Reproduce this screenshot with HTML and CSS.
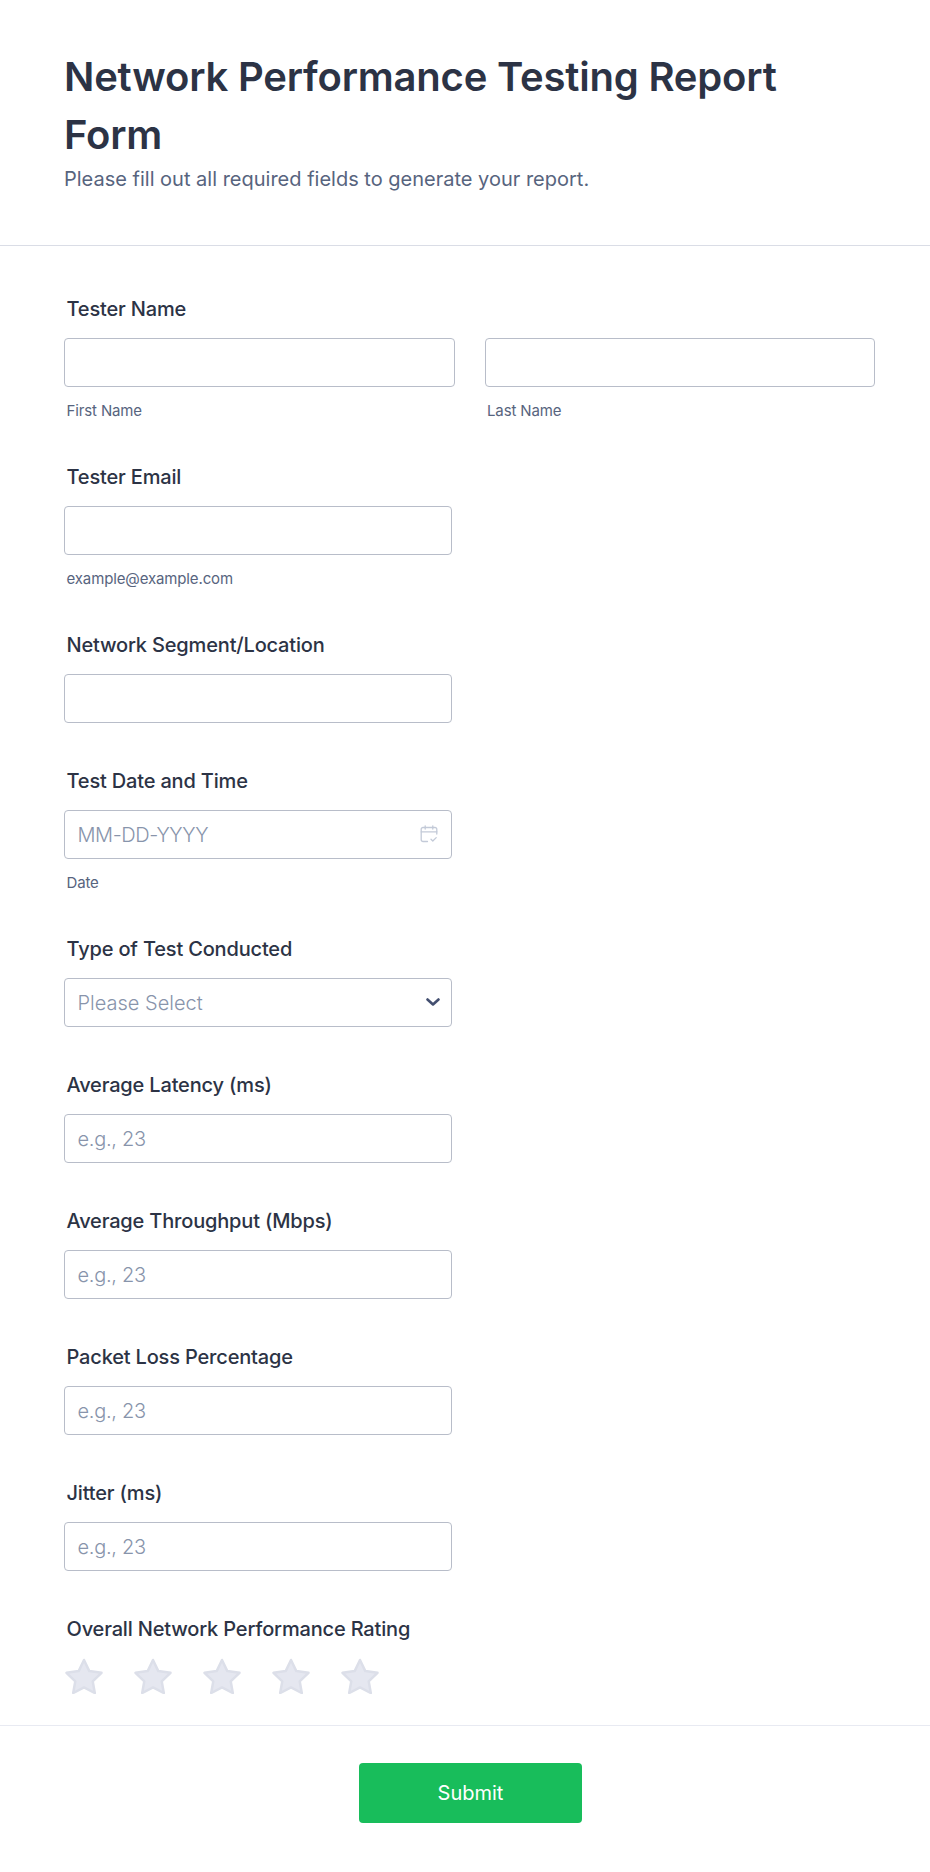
FILE: index.html
```html
<!DOCTYPE html>
<html lang="en">
<head>
<meta charset="utf-8">
<title>Network Performance Testing Report Form</title>
<link rel="stylesheet" href="styles.css">
</head>
<body>
<form class="form">
  <header class="form-header">
    <h1 class="form-title">Network Performance Testing Report Form</h1>
    <p class="form-subtitle">Please fill out all required fields to generate your report.</p>
  </header>
  <div class="form-body">
    <div class="field">
      <label class="label">Tester Name</label>
      <div class="name-row">
        <div class="name-col">
          <input class="input" type="text">
          <span class="sublabel">First Name</span>
        </div>
        <div class="name-col">
          <input class="input" type="text">
          <span class="sublabel">Last Name</span>
        </div>
      </div>
    </div>
    <div class="field">
      <label class="label">Tester Email</label>
      <input class="input narrow" type="email">
      <span class="sublabel">example@example.com</span>
    </div>
    <div class="field">
      <label class="label">Network Segment/Location</label>
      <input class="input narrow" type="text">
    </div>
    <div class="field">
      <label class="label">Test Date and Time</label>
      <div class="control narrow">
        <input class="input date-input" type="text" placeholder="MM-DD-YYYY">
        <svg class="cal-icon" width="18" height="18" viewBox="0 0 18 18" fill="none" stroke="#c3cad8" stroke-width="1.300" stroke-linecap="round" stroke-linejoin="round">
          <path d="M7.500 16.500H3A1.800 1.800 0 0 1 1.200 14.700V4.300A1.800 1.800 0 0 1 3 2.500h12a1.800 1.800 0 0 1 1.800 1.800V9"/>
          <path d="M1.200 6.800h15.600M5.200 0.800v3.200M12.800 0.800v3.200"/>
          <path d="M11 14.200l1.800 1.800 3.400-3.400"/>
        </svg>
      </div>
      <span class="sublabel">Date</span>
    </div>
    <div class="field">
      <label class="label">Type of Test Conducted</label>
      <div class="control narrow">
        <div class="input select">Please Select</div>
        <svg class="chev-icon" width="14" height="9" viewBox="0 0 14 9" fill="none" stroke="#434f70" stroke-width="2.600" stroke-linecap="round" stroke-linejoin="round">
          <path d="M1.500 1.500L7 6.500l5.500-5"/>
        </svg>
      </div>
    </div>
    <div class="field">
      <label class="label">Average Latency (ms)</label>
      <input class="input narrow num-input" type="text" placeholder="e.g., 23">
    </div>
    <div class="field">
      <label class="label">Average Throughput (Mbps)</label>
      <input class="input narrow num-input" type="text" placeholder="e.g., 23">
    </div>
    <div class="field">
      <label class="label">Packet Loss Percentage</label>
      <input class="input narrow num-input" type="text" placeholder="e.g., 23">
    </div>
    <div class="field">
      <label class="label">Jitter (ms)</label>
      <input class="input narrow num-input" type="text" placeholder="e.g., 23">
    </div>
    <div class="field rating-field">
      <label class="label">Overall Network Performance Rating</label>
      <div class="stars">
        <svg class="star" viewBox="0 0 38 36"><path d="M19 2l5.300 11.100 12.200 1.700-8.800 8.500 2.100 11.700L19 29.400 8.200 35l2.100-11.700-8.800-8.500 12.200-1.700z"/></svg>
        <svg class="star" viewBox="0 0 38 36"><path d="M19 2l5.300 11.100 12.200 1.700-8.800 8.500 2.100 11.700L19 29.400 8.200 35l2.100-11.700-8.800-8.500 12.200-1.700z"/></svg>
        <svg class="star" viewBox="0 0 38 36"><path d="M19 2l5.300 11.100 12.200 1.700-8.800 8.500 2.100 11.700L19 29.400 8.200 35l2.100-11.700-8.800-8.500 12.200-1.700z"/></svg>
        <svg class="star" viewBox="0 0 38 36"><path d="M19 2l5.300 11.100 12.200 1.700-8.800 8.500 2.100 11.700L19 29.400 8.200 35l2.100-11.700-8.800-8.500 12.200-1.700z"/></svg>
        <svg class="star" viewBox="0 0 38 36"><path d="M19 2l5.300 11.100 12.200 1.700-8.800 8.500 2.100 11.700L19 29.400 8.200 35l2.100-11.700-8.800-8.500 12.200-1.700z"/></svg>
      </div>
    </div>
  </div>
  <footer class="form-footer">
    <button class="submit" type="button">Submit</button>
  </footer>
</form>
</body>
</html>
```
FILE: styles.css
```css
* { box-sizing: border-box; }
html, body { margin: 0; padding: 0; background: #fff; }
body { font-family: Inter, "Liberation Sans", sans-serif; color: #2c3345; }
.form { width: 930px; }
.form-header { padding: 48px 64px 0; border-bottom: 1px solid #dadde6; height: 246px; }
.form-title { margin: 0; font-size: 40px; line-height: 57.5px; font-weight: 600; letter-spacing: -0.2px; color: #2c3345; }
.form-subtitle { margin: 0; font-size: 20px; line-height: 33px; color: #57647e; }
.form-body { padding: 51px 64px 0; height: 1480px; border-bottom: 1px solid #e8eaf2; }
.field { display: flex; flex-direction: column; align-items: flex-start; margin-bottom: 46px; }
.label { font-size: 20px; line-height: 24px; font-weight: 500; letter-spacing: -0.17px; color: #2c3345; padding-left: 2.5px; margin-bottom: 17px; }
.name-row { display: flex; gap: 30px; }
.name-col { display: flex; flex-direction: column; width: 390.5px; }
.input { display: block; width: 100%; height: 49px; border: 1px solid #b8bdc9; border-radius: 4px; padding: 0 12.5px; background: #fff; font-family: inherit; font-size: 20px; font-weight: 300; color: #8894ab; outline: none; }
.input::placeholder { color: #8894ab; opacity: 1; }
.date-input::placeholder { letter-spacing: -0.4px; }
.num-input::placeholder { letter-spacing: -0.3px; }
.narrow { width: 388px; }
.sublabel { font-size: 15px; line-height: 17px; letter-spacing: -0.13px; color: #57647e; padding-left: 2.5px; margin-top: 15px; }
.control { position: relative; }
.select { display: flex; align-items: center; }
.cal-icon { position: absolute; right: 14px; top: 15px; }
.chev-icon { position: absolute; right: 12px; top: 20px; }
.stars { display: flex; gap: 31px; padding-left: 1px; }
.star { width: 38px; height: 36px; display: block; fill: #e5e7f0; stroke: #dcdfe9; stroke-width: 2.500; stroke-linejoin: round; }
.form-footer { display: flex; justify-content: center; padding-top: 37px; height: 146px; }
.submit { width: 223px; height: 60px; background: #18bd5b; border: none; border-radius: 4px; color: #fff; font-family: inherit; font-size: 20px; font-weight: 400; margin-left: 11px; }
```
